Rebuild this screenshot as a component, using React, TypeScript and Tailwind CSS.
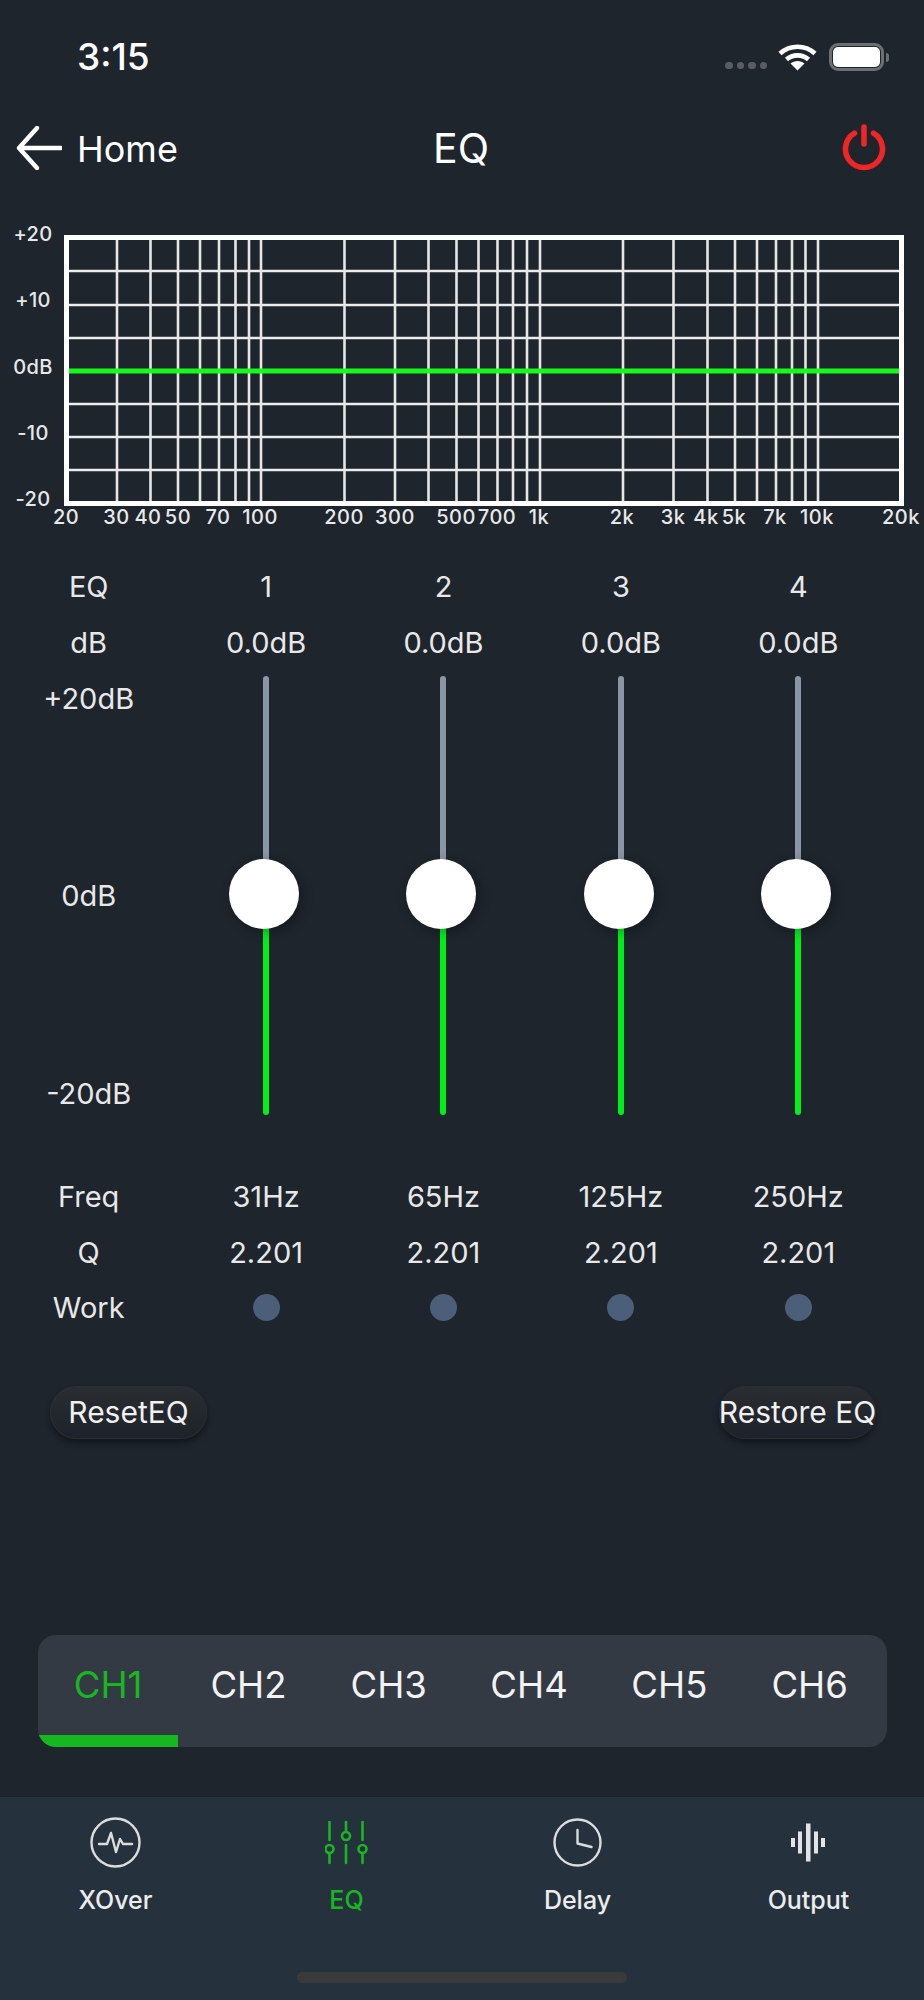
const hLines = [271, 305, 338, 404, 437, 470];
const vLines = [117, 150.5, 178, 200, 219, 235.5, 249, 261, 344.5, 395, 428.5, 456.5, 478.5, 497.5, 513, 527, 540, 623, 673.5, 707.5, 735, 757, 776, 792, 805.5, 818];
const yLabels: [string, number][] = [["+20", 234], ["+10", 300], ["0dB", 367], ["-10", 433], ["-20", 499]];
const xLabels: [string, number][] = [["20", 66], ["30", 116.5], ["40", 148], ["50", 178], ["70", 218], ["100", 260], ["200", 344], ["300", 395], ["500", 456], ["700", 497], ["1k", 539], ["2k", 622], ["3k", 673], ["4k", 706], ["5k", 734], ["7k", 775], ["10k", 817], ["20k", 901]];

function Chart() {
  return (
    <svg className="block w-[924px] h-[363px] shrink-0" viewBox="0 196 924 363" fill="none">
      {hLines.map((y) => <line key={y} x1="69" x2="899" y1={y} y2={y} stroke="#ececec" strokeWidth="2.4" />)}
      {vLines.map((x) => <line key={x} x1={x} x2={x} y1="240" y2="501" stroke="#e6e6e6" strokeWidth="2.6" />)}
      <rect x="66.5" y="237.5" width="835" height="266" stroke="#ffffff" strokeWidth="5" />
      <rect x="69" y="368.5" width="830" height="5" fill="#19f81c" />
      {yLabels.map(([t, y]) => (
        <text key={t} x="33" y={y} dy="0.36em" textAnchor="middle" fill="#e8e8e8" className="text-[20px] font-medium tracking-[0.3px]">{t}</text>
      ))}
      {xLabels.map(([t, x]) => (
        <text key={t} x={x} y="517" dy="0.36em" textAnchor="middle" fill="#e8e8e8" className="text-[20px] font-medium tracking-[0.5px]">{t}</text>
      ))}
    </svg>
  );
}

function Slider() {
  return (
    <div className="relative h-[498px] flex flex-col items-center pt-[5px]">
      <div className="w-[6px] h-[223px] rounded-t-full bg-[#8a96a3]" />
      <div className="w-[6px] h-[216px] rounded-b-full bg-[#00f01c]" />
      <div className="absolute left-1/2 top-[188px] -ml-[37px] w-[70px] h-[70px] rounded-full bg-white shadow-[3px_3px_12px_rgba(0,0,0,0.3)]" />
    </div>
  );
}

function Row({ label, values }: { label: string; values: string[] }) {
  return (
    <>
      <div className="h-[56px] flex items-center justify-center">{label}</div>
      {values.map((v, i) => <div key={i} className="h-[56px] flex items-center justify-center">{v}</div>)}
    </>
  );
}

function PillButton({ label }: { label: string }) {
  return (
    <div className="w-[157px] h-[53px] flex items-center justify-center rounded-full whitespace-nowrap text-[30px] text-[#f0f0f0] bg-gradient-to-b from-[#2a2d31] to-[#1d222a] border border-[#2c2f33] shadow-[0_4px_6px_rgba(0,0,0,0.4)]">
      {label}
    </div>
  );
}

function XOverIcon() {
  return (
    <svg width="51" height="51" viewBox="0 0 51 51" fill="none" stroke="#dcdcdc" strokeWidth="2.4" strokeLinecap="round" strokeLinejoin="round">
      <circle cx="25.5" cy="25.5" r="24" />
      <path d="M9 27h8l4-11 5 19 4-13 3 5h9" />
    </svg>
  );
}

function EqIcon() {
  return (
    <svg width="43" height="51" viewBox="0 0 43 51" fill="none" stroke="#17b71f" strokeWidth="2.6" strokeLinecap="round">
      <path d="M4.5 5v18M4.500 36v10M21 5v9M21 28v18M37.5 5v18M37.5 36v10" />
      <circle cx="4.5" cy="32" r="4" />
      <circle cx="21" cy="19" r="4" />
      <circle cx="37.5" cy="32" r="4" />
    </svg>
  );
}

function ClockIcon() {
  return (
    <svg width="51" height="51" viewBox="0 0 51 51" fill="none" stroke="#dcdcdc" strokeWidth="2.4" strokeLinecap="round" strokeLinejoin="round">
      <circle cx="25.5" cy="25.5" r="23" />
      <path d="M25.5 13v13.5l14 3.5" />
    </svg>
  );
}

function OutputIcon() {
  return (
    <svg width="51" height="51" viewBox="0 0 51 51" fill="#e3e3e3">
      <rect x="8" y="21" width="4" height="9" />
      <rect x="15" y="14.5" width="4" height="22" />
      <rect x="23" y="6.5" width="4.5" height="38" />
      <rect x="31" y="14.5" width="4" height="22" />
      <rect x="38" y="21" width="4" height="9" />
    </svg>
  );
}

const tabs = [
  { label: "XOver", icon: <XOverIcon />, active: false },
  { label: "EQ", icon: <EqIcon />, active: true },
  { label: "Delay", icon: <ClockIcon />, active: false },
  { label: "Output", icon: <OutputIcon />, active: false },
];

export default function App() {
  return (
    <div className="w-[924px] h-[2000px] flex flex-col bg-[#1e252d] text-[#e8e8e8] font-[Inter,sans-serif] overflow-hidden">
      {/* status bar */}
      <div className="h-[100px] shrink-0 flex justify-between items-start pl-[77px] pr-[35px] pt-[43px]">
        <div className="h-[28px] flex items-center text-[37px] font-medium text-white">3:15</div>
        <div className="h-[28px] flex items-center">
          <div className="flex gap-[4px] self-end mb-[2px] mr-[11px]">
            {[0, 1, 2, 3].map((i) => <div key={i} className="w-[7.5px] h-[7.5px] rounded-full bg-[#5a5e63]" />)}
          </div>
          <svg width="39" height="28" viewBox="0 0 39 28" fill="none" stroke="#ffffff" strokeWidth="4.6">
            <path d="M2 10.5C12 1.5 27 1.5 37 10.5" />
            <path d="M8.5 16.5C14.500 11 24.500 11 30.500 16.500" />
            <path d="M19.500 27.500L12.500 20.500C16 17 23 17 26.500 20.500Z" fill="#ffffff" stroke="none" />
          </svg>
          <div className="ml-[12px] w-[55px] h-[28px] rounded-[9px] border-[3px] border-[#6b6f74] p-[1px]">
            <div className="w-full h-full rounded-[5px] bg-white" />
          </div>
          <div className="ml-[1.5px] w-[3.5px] h-[9px] rounded-r-full bg-[#6b6f74]" />
        </div>
      </div>

      {/* nav */}
      <div className="h-[96px] shrink-0 grid grid-cols-3 items-center pl-[16px] pr-[38px]">
        <div className="flex items-center gap-[15px] text-[36px] text-white">
          <svg width="46" height="44" viewBox="0 0 46 44" fill="none" stroke="#ffffff" strokeWidth="4.400" strokeLinecap="round" strokeLinejoin="round">
            <path d="M45 22H4M21 2L3 22l18 20" />
          </svg>
          <span className="pt-[2px]">Home</span>
        </div>
        <div className="text-center text-[41px] text-white ml-[20px] pt-[2px]">EQ</div>
        <div className="flex justify-end">
          <svg width="44" height="48" viewBox="0 0 44 48" fill="none" stroke="#f02626" strokeWidth="5.600" strokeLinecap="round">
            <path d="M22 3v17" />
            <path d="M12.500 9.100a18.500 18.500 0 1 0 19 0" />
          </svg>
        </div>
      </div>

      <Chart />

      {/* EQ table */}
      <div className="grid grid-cols-5 w-[887px] text-[29px] shrink-0">
        <Row label="EQ" values={["1", "2", "3", "4"]} />
        <Row label="dB" values={["0.0dB", "0.0dB", "0.0dB", "0.0dB"]} />
        <div className="h-[498px] flex flex-col justify-between items-center pt-[6px] pb-[6px]">
          <span>+20dB</span>
          <span className="-mt-[1px]">0dB</span>
          <span className="mb-[48px]">-20dB</span>
        </div>
        <Slider />
        <Slider />
        <Slider />
        <Slider />
        <Row label="Freq" values={["31Hz", "65Hz", "125Hz", "250Hz"]} />
        <Row label="Q" values={["2.201", "2.201", "2.201", "2.201"]} />
        <div className="h-[53px] flex items-center justify-center">Work</div>
        {[0, 1, 2, 3].map((i) => (
          <div key={i} className="h-[53px] flex items-center justify-center">
            <div className="w-[27px] h-[27px] rounded-full bg-[#4b5f7a]" />
          </div>
        ))}
      </div>

      {/* buttons */}
      <div className="shrink-0 flex justify-between pl-[50px] pr-[48px] pt-[52px]">
        <PillButton label="ResetEQ" />
        <PillButton label="Restore EQ" />
      </div>

      {/* channel tabs */}
      <div className="shrink-0 mt-[196px] ml-[38px] w-[849px] h-[112px] rounded-[18px] bg-[#333a44] overflow-hidden flex text-[36.500px] text-[#f2f2f2]">
        {["CH1", "CH2", "CH3", "CH4", "CH5", "CH6"].map((c, i) => (
          <div key={c} className={i === 0 ? "w-[140.300px] flex items-start justify-center pt-[23px] text-[#17b71f] border-b-[12px] border-[#17b71f]" : "w-[140.300px] flex items-start justify-center pt-[23px]"}>
            {c}
          </div>
        ))}
      </div>

      {/* tab bar */}
      <div className="mt-[49px] flex-1 relative bg-[#25323e] border-t border-[#1c232b] grid grid-cols-4">
        {tabs.map((t) => (
          <div key={t.label} className="flex flex-col items-center pt-[20px]">
            <div className="h-[51px] flex items-center justify-center">{t.icon}</div>
            <div className={t.active ? "mt-[16px] text-[25px] leading-[32px] font-medium text-[#17b71f]" : "mt-[16px] text-[25px] leading-[32px] font-medium text-[#ececec]"}>{t.label}</div>
          </div>
        ))}
        <div className="absolute left-[297px] top-[175px] w-[330px] h-[11px] rounded-full bg-[#3a3a3a]" />
      </div>
    </div>
  );
}
